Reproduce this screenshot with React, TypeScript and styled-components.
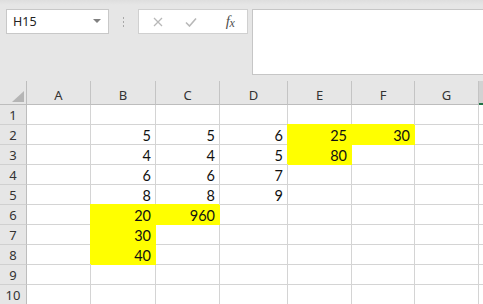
import React from "react";
import styled, { createGlobalStyle } from "styled-components";

const Global = createGlobalStyle`
  html, body { margin: 0; padding: 0; background: #e6e6e6; }
  body { font-family: "Noto Sans", "Liberation Sans", sans-serif; }
`;

const Page = styled.div`
  width: 483px;
  height: 304px;
  overflow: hidden;
  background: #e6e6e6;
  display: flex;
  flex-direction: column;
`;

const TopBar = styled.div`
  height: 81px;
  flex: none;
  display: flex;
  align-items: flex-start;
  padding: 9px 0 0 6px;
  box-sizing: border-box;
  background: linear-gradient(#dedede 0, #e6e6e6 5px);
`;

const NameBox = styled.div`
  width: 103px;
  height: 25px;
  box-sizing: border-box;
  background: #fff;
  border: 1px solid #c8c8c8;
  display: flex;
  align-items: center;
  justify-content: space-between;
  padding: 0 7px 0 6px;
  font-size: 12.5px;
  color: #222;
`;

const Caret = styled.span`
  width: 0;
  height: 0;
  border-left: 4px solid transparent;
  border-right: 4px solid transparent;
  border-top: 4px solid #808080;
  margin-bottom: 2px;
`;

const Grip = styled.div`
  width: 29px;
  height: 25px;
  display: flex;
  flex-direction: column;
  align-items: center;
  justify-content: center;
  gap: 2px;
`;

const Dot = styled.span`
  width: 1px;
  height: 2px;
  background: #a8a8a8;
`;

const FxBox = styled.div`
  width: 110px;
  height: 25px;
  box-sizing: border-box;
  background: #fff;
  border: 1px solid #d0d0d0;
  display: flex;
  align-items: center;
  padding-left: 13px;
`;

const FxSlot = styled.span<{ $w: number }>`
  width: ${(p) => p.$w}px;
  display: flex;
  justify-content: center;
  align-items: center;
`;

const FxText = styled.span`
  font-family: "Liberation Serif", serif;
  font-style: italic;
  font-size: 15px;
  color: #505050;
  letter-spacing: -0.5px;
  & > span {
    font-size: 12px;
    position: relative;
    top: 1px;
  }
`;

const FormulaInput = styled.div`
  flex: 1;
  margin-left: 4px;
  height: 66px;
  box-sizing: border-box;
  background: #fff;
  border: 1px solid #c6c6c6;
  border-right: none;
`;

const COLS = [27, 64, 65, 64, 68, 64, 63, 64, 20];

const Grid = styled.div`
  display: grid;
  grid-template-columns: ${COLS.map((c) => c + "px").join(" ")};
  grid-template-rows: 24px repeat(10, 20px);
`;

const Corner = styled.div`
  background: #e6e6e6;
  border-right: 1px solid #bdbdbd;
  border-bottom: 1px solid #bdbdbd;
  box-sizing: border-box;
  display: flex;
  align-items: flex-end;
  justify-content: flex-end;
  padding: 0 2px 2px 0;
`;

const ColHead = styled.div<{ $active?: boolean }>`
  box-sizing: border-box;
  background: ${(p) => (p.$active ? "#d2d2d2" : "#e6e6e6")};
  border-right: 1px solid #c4c4c4;
  border-bottom: ${(p) => (p.$active ? "2px solid #217346" : "1px solid #bdbdbd")};
  display: flex;
  align-items: center;
  justify-content: center;
  padding-top: 5px;
  font-size: 13px;
  color: #333;
`;

const RowHead = styled.div`
  box-sizing: border-box;
  background: #e6e6e6;
  border-right: 1px solid #bdbdbd;
  border-bottom: 1px solid #d0d0d0;
  display: flex;
  align-items: center;
  justify-content: center;
  padding-top: 1px;
  font-size: 13px;
  color: #333;
`;

const Cell = styled.div<{ $fill?: boolean }>`
  box-sizing: border-box;
  background: ${(p) => (p.$fill ? "#ffff00" : "#fff")};
  border-right: 1px solid ${(p) => (p.$fill ? "#ffff00" : "#d4d4d4")};
  border-bottom: 1px solid ${(p) => (p.$fill ? "#ffff00" : "#d4d4d4")};
  box-shadow: ${(p) => (p.$fill ? "-1px -1px 0 0 #ffff00" : "none")};
  display: flex;
  align-items: center;
  justify-content: flex-end;
  padding: 2px 4px 0 0;
  font-family: Lato, "Open Sans", sans-serif;
  font-size: 14.5px;
  color: #111;
`;

type CellData = { v?: string; fill?: boolean };

const data: Record<string, CellData> = {
  B2: { v: "5" }, C2: { v: "5" }, D2: { v: "6" }, E2: { v: "25", fill: true }, F2: { v: "30", fill: true },
  B3: { v: "4" }, C3: { v: "4" }, D3: { v: "5" }, E3: { v: "80", fill: true },
  B4: { v: "6" }, C4: { v: "6" }, D4: { v: "7" },
  B5: { v: "8" }, C5: { v: "8" }, D5: { v: "9" },
  B6: { v: "20", fill: true }, C6: { v: "960", fill: true },
  B7: { v: "30", fill: true },
  B8: { v: "40", fill: true },
};

const letters = ["A", "B", "C", "D", "E", "F", "G", "H"];

export default function App() {
  return (
    <Page>
      <Global />
      <TopBar>
        <NameBox>
          <span>H15</span>
          <Caret />
        </NameBox>
        <Grip>
          <Dot />
          <Dot />
          <Dot />
        </Grip>
        <FxBox>
          <FxSlot $w={12}>
            <svg width="10" height="10" viewBox="0 0 10 10">
              <path d="M1 1 L9 9 M9 1 L1 9" stroke="#b8b8b8" strokeWidth="1.3" />
            </svg>
          </FxSlot>
          <FxSlot $w={54}>
            <svg width="12" height="10" viewBox="0 0 12 10">
              <path d="M1 5.5 L4.5 9 L11 1.5" stroke="#b8b8b8" strokeWidth="1.6" fill="none" />
            </svg>
          </FxSlot>
          <FxSlot $w={24}>
            <FxText>
              f<span>x</span>
            </FxText>
          </FxSlot>
        </FxBox>
        <FormulaInput />
      </TopBar>
      <Grid>
        <Corner>
          <svg width="12" height="11" viewBox="0 0 12 11">
            <path d="M12 0 L12 11 L0 11 Z" fill="#b5b5b5" />
          </svg>
        </Corner>
        {letters.map((l) => (
          <ColHead key={l} $active={l === "H"}>
            {l === "H" ? "" : l}
          </ColHead>
        ))}
        {Array.from({ length: 10 }, (_, r) => (
          <React.Fragment key={r}>
            <RowHead>{r + 1}</RowHead>
            {letters.map((l) => {
              const d = data[`${l}${r + 1}`];
              return (
                <Cell key={l} $fill={d?.fill}>
                  {d?.v}
                </Cell>
              );
            })}
          </React.Fragment>
        ))}
      </Grid>
    </Page>
  );
}
